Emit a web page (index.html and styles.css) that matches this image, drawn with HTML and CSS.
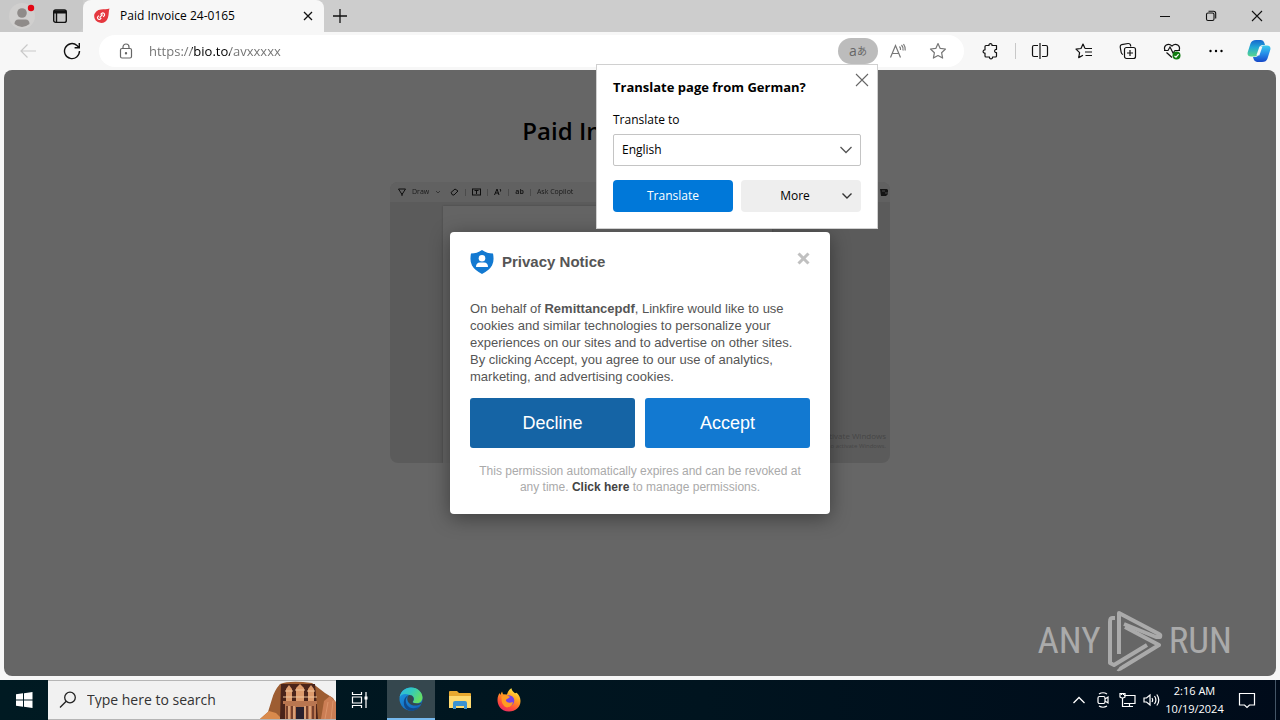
FILE: index.html
```html
<!DOCTYPE html>
<html lang="en">
<head>
<meta charset="utf-8">
<title>Paid Invoice 24-0165</title>
<link rel="stylesheet" href="styles.css">
</head>
<body>
<header class="tabbar">
  <div class="tabbar-left">
    <button class="plain profile" aria-label="Profile">
      <svg width="30" height="30" viewBox="0 0 30 30"><circle cx="15" cy="15" r="13" fill="#d0cfce"/><circle cx="15" cy="12" r="4.800" fill="#8f8b89"/><path d="M7.500 23q0-4.500 4-4.500h7q4 0 4 4.500-4 3-7.500 3t-7.500-3z" fill="#8f8b89"/><circle cx="24" cy="7" r="3.200" fill="#e30613"/></svg>
    </button>
    <button class="plain workspaces" aria-label="Tab actions">
      <svg width="16" height="16" viewBox="0 0 16 16" fill="none" stroke="#111" stroke-width="1.400"><rect x="1.700" y="2" width="12.600" height="12.400" rx="2"/><path d="M2 4h12" stroke-width="3"/><path d="M4.500 4v10"/></svg>
    </button>
  </div>
  <div class="tab">
    <svg width="17" height="16" viewBox="0 0 17 16"><path d="M8 1.500C11 1 14 1.500 16.500.5 15.500 3 16 6 15 9.500A7 6.700 0 1 1 8 1.500z" fill="#e5383f"/><path d="M6.600 9.700l3-3.200M7.600 6.500l1-1a1.700 1.700 0 0 1 2.500 2.400l-1 1M8.300 10l-1 1A1.700 1.700 0 0 1 4.900 8.600l1-1" stroke="#fff" stroke-width="1.100" fill="none"/></svg>
    <span class="tab-title">Paid Invoice 24-0165</span>
    <button class="plain tab-close" aria-label="Close tab"><svg width="10" height="10" viewBox="0 0 10 10" stroke="#111" stroke-width="1.300"><path d="M1 1l8 8M9 1l-8 8"/></svg></button>
  </div>
  <button class="plain newtab" aria-label="New tab"><svg width="14" height="14" viewBox="0 0 14 14" stroke="#111" stroke-width="1.300"><path d="M7 0v14M0 7h14"/></svg></button>
  <div class="window-controls">
    <button class="plain" aria-label="Minimize"><svg width="12" height="12" viewBox="0 0 12 12"><path d="M1 6.500h10" stroke="#111"/></svg></button>
    <button class="plain" aria-label="Restore"><svg width="12" height="12" viewBox="0 0 12 12" fill="none" stroke="#111" stroke-width="1.100"><rect x="1.500" y="3" width="7.500" height="7.500" rx="1.500"/><path d="M3.500 1.200h5q2.200 0 2.200 2.200v5"/></svg></button>
    <button class="plain" aria-label="Close"><svg width="12" height="12" viewBox="0 0 12 12" stroke="#111" stroke-width="1.100"><path d="M1 1l10 10M11 1L1 11"/></svg></button>
  </div>
</header>

<nav class="toolbar">
  <button class="plain tool" aria-label="Back"><svg width="18" height="16" viewBox="0 0 18 16" fill="none" stroke="#c9c9c9" stroke-width="1.200"><path d="M17 8H2M8.500 1.500L2 8l6.500 6.500"/></svg></button>
  <button class="plain tool" aria-label="Refresh"><svg width="18" height="18" viewBox="0 0 18 18" fill="none" stroke="#111" stroke-width="1.400"><path d="M16.500 9A7.500 7.500 0 1 1 14 3.500l2 2M16.300 1v4.700h-4.700"/></svg></button>
  <div class="address">
    <svg class="lock" width="14" height="16" viewBox="0 0 14 16" fill="none" stroke="#666" stroke-width="1.200"><rect x="1.500" y="5.500" width="11" height="9.500" rx="1.500"/><path d="M4 5.500V4a3 3 0 0 1 6 0v1.500"/><circle cx="7" cy="10.300" r=".6" fill="#666"/></svg>
    <input class="url" type="text" aria-label="Address" value="https://bio.to/avxxxxx">
    <div class="translate-anchor">
      <button class="plain translate-toggle" aria-label="Translate">a<span>あ</span></button>
      <section class="translate-popup" aria-label="Translate">
        <div class="translate-head">
          <h2>Translate page from German?</h2>
          <button class="plain popup-close" aria-label="Close translate"><svg width="14" height="14" viewBox="0 0 14 14" stroke="#666" stroke-width="1.100"><path d="M1 1l12 12M13 1L1 13"/></svg></button>
        </div>
        <label for="language">Translate to</label>
        <div class="select-wrap">
          <select id="language"><option>English</option></select>
          <svg width="12" height="8" viewBox="0 0 12 8" fill="none" stroke="#555" stroke-width="1.300"><path d="M.5 1L6 6.500 11.500 1"/></svg>
        </div>
        <div class="popup-actions">
          <button class="btn primary">Translate</button>
          <button class="btn more"><span>More</span><svg width="12" height="8" viewBox="0 0 12 8" fill="none" stroke="#333" stroke-width="1.400"><path d="M1.500 1.500L6 6l4.500-4.500"/></svg></button>
        </div>
      </section>
    </div>
    <button class="plain addr-btn" aria-label="Read aloud"><svg width="18" height="16" viewBox="0 0 18 16" fill="none" stroke="#777" stroke-width="1.200"><path d="M1.500 14.500L6.500 2.500l5 12M3.300 10.500h6.500M10.500 3.500q1.300 1.300 1 3.500M12.500 2q2.200 2.300 1.500 5.500M14.500 1q2.200 3 1.700 6.500"/></svg></button>
    <button class="plain addr-btn" aria-label="Favorite"><svg width="18" height="18" viewBox="0 0 18 18" fill="none" stroke="#777" stroke-width="1.200" stroke-linejoin="round"><path d="M9 1.500l2.200 4.900 5.300.6-3.900 3.700 1 5.400L9 13.500l-4.600 2.600 1-5.400L1.500 7l5.300-.6z"/></svg></button>
  </div>
  <button class="plain tool" aria-label="Extensions"><svg width="18" height="18" viewBox="0 0 18 18" fill="none" stroke="#111" stroke-width="1.200" stroke-linejoin="round"><path d="M4 3.500h3C6.500 1 10.500 1 10 3.500h4.500v4c-2.500-.5-2.500 3.500 0 3V14q0 1-1 1H10.500c.5 2.400-3.500 2.400-3 0H4q-1 0-1-1v-3C.500 11.500.500 7.500 3 8V4.500q0-1 1-1z"/></svg></button>
  <span class="divider"></span>
  <button class="plain tool" aria-label="Split screen"><svg width="18" height="18" viewBox="0 0 18 18" fill="none" stroke="#111" stroke-width="1.200"><path d="M7 3.500H3q-1.500 0-1.500 1.500v8q0 1.500 1.500 1.500h4M11 3.500h4q1.500 0 1.500 1.500v8q0 1.500-1.500 1.500h-4M9 1v16"/></svg></button>
  <button class="plain tool" aria-label="Favorites"><svg width="18" height="18" viewBox="0 0 18 18" fill="none" stroke="#111" stroke-width="1.200" stroke-linejoin="round"><path d="M10 6.500L8 2 6 6.500l-5 .6 3.600 3.500-.9 5L8 13.300M10 6.500h7M10 10h7M10.500 13.500H17"/></svg></button>
  <button class="plain tool" aria-label="Collections"><svg width="18" height="18" viewBox="0 0 18 18" fill="none" stroke="#111" stroke-width="1.200"><path d="M4 12.500Q2.500 12 2.200 10.500L1.200 5q-.2-2 1.500-2.300L9 1.500q2-.2 2.500 1.500l.2 1.500"/><rect x="5.500" y="5.500" width="11" height="11" rx="2"/><path d="M11 8v6M8 11h6"/></svg></button>
  <button class="plain tool" aria-label="Browser essentials"><svg width="18" height="18" viewBox="0 0 18 18" fill="none" stroke="#111" stroke-width="1.200"><path d="M2 8.200C0 4 5 .2 9 4c4-3.800 9 0 7 4.200M1 8.500h4l2-3.500 3 6 2-2.500h5M3.500 10.500L9 15.500"/><circle cx="13.500" cy="13.500" r="4" fill="#107c10" stroke="none"/><path d="M11.500 14l1.500 1.200 2.600-3" stroke="#fff"/></svg></button>
  <button class="plain tool" aria-label="Settings and more"><svg width="16" height="4" viewBox="0 0 16 4"><circle cx="2.500" cy="2" r="1.200"/><circle cx="8" cy="2" r="1.200"/><circle cx="13.500" cy="2" r="1.200"/></svg></button>
  <button class="plain tool copilot" aria-label="Copilot">
    <svg width="24" height="24" viewBox="0 0 24 24"><defs><linearGradient id="cpA" x1="0" y1="0" x2="0" y2="1"><stop offset="0" stop-color="#1667cf"/><stop offset=".45" stop-color="#22a7d5"/><stop offset="1" stop-color="#58d68c"/></linearGradient><linearGradient id="cpB" x1="0" y1="0" x2="0" y2="1"><stop offset="0" stop-color="#39cdee"/><stop offset=".5" stop-color="#268ce9"/><stop offset="1" stop-color="#1648c8"/></linearGradient></defs><path d="M9 1h5q2.500 0 3.300 2.700L18 6h-2.500q-2 0-2.700 2.300L11 15q-.7 2.500-3.400 2.500H4q-4.200 0-3.300-4.300L3.500 4.500Q4.700 1 9 1z" fill="url(#cpA)"/><path d="M15 23h-5q-2.500 0-3.300-2.700L6 18h2.500q2 0 2.700-2.300L13 9q.7-2.500 3.400-2.500H20q4.200 0 3.300 4.300l-2.800 8.700Q19.300 23 15 23z" fill="url(#cpB)"/><path d="M12.500 7.500h3l-3.200 9h-3z" fill="#f7f7f7"/></svg>
  </button>
</nav>

<main class="viewport">
  <div class="page">
    <h1>Paid Invoice 24-0165</h1>
    <div class="preview">
      <div class="preview-bar">
        <svg width="8" height="8" viewBox="0 0 8 8" fill="none" stroke="#222"><path d="M.5 1h7L4 6.500zM4 5v3"/></svg>
        <span>Draw</span>
        <svg width="6" height="4" viewBox="0 0 6 4" fill="none" stroke="#888"><path d="M1 1l2 2 2-2"/></svg>
        <svg class="eraser" width="9" height="8" viewBox="0 0 9 8" fill="none" stroke="#222"><path d="M1 4.500L5 1l3 2-4 4H2.500z"/></svg>
        <i></i>
        <svg width="9" height="8" viewBox="0 0 9 8" fill="none" stroke="#222"><rect x=".5" y="1" width="8" height="6"/><path d="M2.500 2.500h4M4.500 2.500V6"/></svg>
        <i></i>
        <svg width="8" height="8" viewBox="0 0 8 8" fill="none" stroke="#222"><path d="M.5 7L3 1l2 6M1.500 5h3M6 1q1 1 .5 2.500"/></svg>
        <i></i>
        <b>ab</b>
        <i></i>
        <span>Ask Copilot</span>
        <svg class="save" width="9" height="8" viewBox="0 0 9 8"><path d="M0 1h7l1 1v4L6 8H1z" fill="#333"/><path d="M2 3h3M5 5h3" stroke="#bbb"/></svg>
      </div>
      <div class="preview-body">
        <div class="paper"></div>
        <div class="activate"><span>Activate Windows</span><small>Go to Settings to activate Windows.</small></div>
      </div>
    </div>
  </div>
  <div class="overlay">
    <section class="notice" role="dialog" aria-labelledby="notice-title">
      <div class="notice-head">
        <svg width="24" height="24" viewBox="0 0 24 24"><path d="M12 0Q17 3.500 23 3.500q1.500 7.500-1 12T12 24Q4.500 20 2 15.500T1 3.500Q7 3.500 12 0z" fill="#1279d1"/><circle cx="12" cy="8.300" r="3.300" fill="#fff"/><path d="M6 17q0-4.500 4-4.500h4q4 0 4 4.500z" fill="#fff"/></svg>
        <h2 id="notice-title">Privacy Notice</h2>
        <button class="plain notice-close" aria-label="Close notice"><svg width="13" height="13" viewBox="0 0 13 13" stroke="#c0c0c0" stroke-width="3"><path d="M1.500 1.500l10 10M11.500 1.500l-10 10"/></svg></button>
      </div>
      <p class="notice-text">On behalf of <strong>Remittancepdf</strong>, Linkfire would like to use<br>cookies and similar technologies to personalize your<br>experiences on our sites and to advertise on other sites.<br>By clicking Accept, you agree to our use of analytics,<br>marketing, and advertising cookies.</p>
      <div class="notice-actions">
        <button class="choice decline">Decline</button>
        <button class="choice">Accept</button>
      </div>
      <p class="notice-foot">This permission automatically expires and can be revoked at<br>any time. <a href="#">Click here</a> to manage permissions.</p>
    </section>
  </div>
  <div class="watermark">
    <span>ANY</span>
    <svg width="56" height="62" viewBox="0 0 56 62" fill="none" stroke="#aaa" stroke-width="4" stroke-linejoin="round"><path d="M8 8H5Q3 8 3 12V53l4 2L40 35"/><path d="M12 44V3L52 24q2 1 1 3L49 27 17 14"/><path d="M18 17l34 18L16 57q-4 3-5 2"/></svg>
    <span>RUN</span>
  </div>
</main>

<footer class="taskbar">
  <button class="plain task" aria-label="Start"><svg width="17" height="16" viewBox="0 0 17 16" fill="#fff"><path d="M0 2.300l7-1v6.200H0zM8 1.200L16.500 0v7.500H8zM0 8.500h7v6.200l-7-1zM8 8.500h8.500V16L8 14.800z"/></svg></button>
  <label class="search">
    <svg width="18" height="18" viewBox="0 0 18 18" fill="none" stroke="#222" stroke-width="1.300"><circle cx="11" cy="6.500" r="5.300"/><path d="M7.200 10.300L1 16.500"/></svg>
    <input type="search" placeholder="Type here to search" aria-label="Search">
    <svg class="petra" width="76" height="38" viewBox="0 0 76 38"><path d="M0 38L8 31l4-13q2-8 8-15 10-4 32-1l13 10 8 5 3 5v16z" fill="#9d5d32"/><path d="M0 38l9-8 7 2 6 6z" fill="#d98a4c"/><path d="M21 3h34l3 35H20z" fill="#4a241a"/><path d="M25 38V23h31v15zM23 20h34v3H23z" fill="#b97650"/><path d="M26 8l3-4 3 4v12h-6zM48 8l3-4 3 4v12h-6zM36 7l4-4 4 4v13h-8z" fill="#dd9b6c"/><path d="M25 10h8M47 10h8M35 9h10M23 16h34" stroke="#f0c49a" stroke-width="1.200"/><path d="M27 25v13M32 25v13M47 25v13M53 25v13" stroke="#76402c" stroke-width="2"/><path d="M36 26h8v12h-8z" fill="#29212e"/><path d="M34 25v13M45 25v13M29 25v13M50 25v13" stroke="#efbb91" stroke-width="1.200"/><path d="M61 38l3-18 6-5 6 6v17z" fill="#cb7e54"/><path d="M65 38l3-17M71 38l2-18" stroke="#dc946a"/></svg>
  </label>
  <button class="plain task" aria-label="Task view"><svg width="18" height="18" viewBox="0 0 18 18" fill="none" stroke="#fff" stroke-width="1.200"><path d="M1.500 1v2.500h9V1M1.500 17v-2.500h9V17M1.500 6h9v6h-9zM15 1v16"/><rect x="13.500" y="5.500" width="3" height="3" fill="#fff" stroke="none"/></svg></button>
  <button class="plain task active" aria-label="Microsoft Edge">
    <svg width="24" height="24" viewBox="0 0 24 24"><defs><linearGradient id="egA" x1="0" y1="0" x2="1" y2=".5"><stop offset="0" stop-color="#30b8e8"/><stop offset=".5" stop-color="#32c9bd"/><stop offset="1" stop-color="#65de64"/></linearGradient><linearGradient id="egB" x1="0" y1="0" x2=".6" y2="1"><stop offset="0" stop-color="#1c9ce5"/><stop offset="1" stop-color="#1467bd"/></linearGradient></defs><circle cx="12" cy="12" r="11.500" fill="url(#egB)"/><path d="M.7 10C2 4 6.500.5 12 .5c7 0 11.500 5 11.500 10 0 4-3 5.800-6 5.800-2.500 0-4-.8-3.500-1.800 2.500-3 0-6.700-4-6.700C6 6 2.500 7 .7 10z" fill="url(#egA)"/><path d="M10 8c-3 2-4 5.500-2.500 9 2 4.500 8 5.500 13.500 2.500-3 4-8 5-12 3.500C3 20 3.500 10 10 8z" fill="#114a8b"/><path d="M13.800 14.500c2.500-3 0-6.700-3.800-6.500-2 2-2.500 5 0 8 3 3.300 8 3 11.500 1.200l1.800-2c-2 1.300-6 1.700-8.500.8-.8-.3-1.500-.8-1-1.500z" fill="#35474e"/></svg>
  </button>
  <button class="plain task" aria-label="File Explorer"><svg width="22" height="20" viewBox="0 0 22 20"><path d="M0 2q0-1 1-1h7l2 2h11q1 0 1 1v14H0z" fill="#e8a92f"/><path d="M0 6h22v12H0z" fill="#ffda70"/><path d="M4 19v-6q0-2 2-2h10q2 0 2 2v6h-3v-3H7v3z" fill="#3b92d2"/></svg></button>
  <button class="plain task" aria-label="Firefox">
    <svg width="24" height="24" viewBox="0 0 24 24"><defs><linearGradient id="ffA" x1=".8" y1="0" x2=".3" y2="1"><stop offset="0" stop-color="#fff04c"/><stop offset=".4" stop-color="#ffa020"/><stop offset=".75" stop-color="#ff4c3b"/><stop offset="1" stop-color="#e92b62"/></linearGradient></defs><path d="M12 23.500C4 23.500.5 17.500.5 12c0-3 1-5.500 2.200-7l.5 2L5 3.500l1 2.700 4 .2C11 3 13 1 14.500.3c.3 2.700 2 3.500 3.500 5l1.500-.5c2.300 1.600 4 4.700 4 8.200 0 6-5 10.500-11.500 10.500z" fill="url(#ffA)"/><circle cx="12" cy="12.500" r="5.300" fill="#7542e5"/><path d="M4.500 8.500q5-2.500 8.500.5l-2 1.500q-2.500.5-2 2.500 2 3 7 1-1 5-6 5.500Q4 18 4.500 8.500z" fill="#ff9c22"/></svg>
  </button>
  <div class="tray">
    <button class="plain" aria-label="Show hidden icons"><svg width="12" height="8" viewBox="0 0 12 8" fill="none" stroke="#fff" stroke-width="1.300"><path d="M.5 7L6 1.500 11.500 7"/></svg></button>
    <button class="plain" aria-label="Meet now"><svg width="14" height="18" viewBox="0 0 14 18" fill="none" stroke="#fff" stroke-width="1.200"><rect x="2" y="5.500" width="7" height="7" rx="1.500"/><path d="M9 8l3-2v6l-3-2M3 3q4-2.500 8 0M3 15q4 2.500 8 0"/></svg></button>
    <button class="plain" aria-label="Network"><svg width="17" height="16" viewBox="0 0 17 16" fill="none" stroke="#fff" stroke-width="1.200"><path d="M5 3.500h11v8H5M10.500 11.500V14M7 14.500h7M3.500 6v8.500H7"/><path d="M1 1.500h5V5q-2.500 2-5 0zM2.500 1v2M4.500 1v2"/></svg></button>
    <button class="plain" aria-label="Volume"><svg width="17" height="14" viewBox="0 0 17 14" fill="none" stroke="#fff" stroke-width="1.200"><path d="M1 5h2.500L7 2v10L3.500 9H1zM9 5q1.300 2 0 4M11.500 3q2.800 4 0 8M13.800 1.500q4 5.500 0 11"/></svg></button>
    <div class="clock"><time>2:16 AM</time><time>10/19/2024</time></div>
    <button class="plain notifications" aria-label="Notifications"><svg width="20" height="17" viewBox="0 0 20 17" fill="none" stroke="#fff" stroke-width="1.200"><path d="M2.500 1.500h15v11.500h-5L10 15.500 7.500 13h-5z"/></svg></button>
  </div>
</footer>
</body>
</html>
```
FILE: styles.css
```css
* { box-sizing: border-box; }
body {
  margin: 0;
  min-height: 100vh;
  display: flex;
  flex-direction: column;
  background: #f7f7f7;
  color: #000;
  font: 12px/16px "Open Sans", "Noto Sans", sans-serif;
}
h1, h2, p { margin: 0; }
button, input, select { font: inherit; color: inherit; }
svg { display: block; flex: none; }
.plain {
  display: flex;
  align-items: center;
  justify-content: center;
  padding: 0;
  border: 0;
  background: none;
}

/* Tab strip */
.tabbar { display: flex; height: 32px; background: #cdcdcd; }
.tabbar-left {
  display: flex;
  align-items: center;
  gap: 15px;
  width: 83px;
  padding-left: 7px;
  border-bottom-right-radius: 6px;
  background: #c8c8c8;
}
.tab {
  display: flex;
  align-items: center;
  gap: 10px;
  width: 241px;
  padding: 0 11px 0 10px;
  border-radius: 8px 8px 0 0;
  background: #f7f7f7;
}
.tab-title { flex: 1; font-size: 12px; }
.newtab { width: 32px; }
.window-controls { display: flex; margin-left: auto; }
.window-controls button { width: 46px; }

/* Toolbar */
.toolbar { display: flex; align-items: center; height: 38px; padding-left: 6px; }
.tool { width: 44px; height: 32px; }
.copilot { width: 42px; }
.divider { width: 1px; height: 16px; margin: 0 2px; background: #c8c8c8; }
.address {
  flex: 1;
  display: flex;
  align-items: center;
  height: 32px;
  margin: 0 5px;
  padding: 0 6px 0 20px;
  border-radius: 16px;
  background: #fff;
}
.url {
  flex: 1;
  min-width: 0;
  margin-left: 16px;
  padding: 0;
  border: 0;
  outline: 0;
  font-size: 13px;
  line-height: 20px;
  color: transparent;
  background: linear-gradient(90deg, #707070 43px, #000 43px, #000 81px, #707070 81px);
  background-clip: text;
}
.translate-anchor { position: relative; }
.translate-toggle {
  width: 40px;
  height: 26px;
  border-radius: 13px;
  background: #bcbcbc;
  color: #666;
  font: 14px/16px "Open Sans", "Noto Sans CJK JP", sans-serif;
}
.translate-toggle span { font-size: 10px; }
.addr-btn { width: 40px; height: 28px; }

/* Translate popup */
.translate-popup {
  position: absolute;
  z-index: 10;
  top: 26px;
  right: 0;
  width: 282px;
  padding: 8px 16px 16px;
  border: 1px solid #d0d0d0;
  background: #fff;
}
.translate-head { display: flex; justify-content: space-between; }
.translate-head h2 { padding-top: 4px; font-size: 13px; line-height: 20px; font-weight: 700; }
.popup-close { width: 14px; height: 14px; margin-right: -8px; }
.translate-popup label { display: block; margin: 15px 0 6px; line-height: 16px; }
.select-wrap { display: grid; align-items: center; }
.select-wrap > * { grid-area: 1 / 1; }
.select-wrap select {
  appearance: none;
  height: 32px;
  padding: 0 8px;
  border: 1px solid #c4c4c4;
  border-radius: 2px;
  background: #fff;
}
.select-wrap svg { justify-self: end; margin-right: 9px; pointer-events: none; }
.popup-actions { display: grid; grid-template-columns: 1fr 1fr; gap: 8px; margin-top: 14px; }
.btn { height: 32px; border: 0; border-radius: 4px; padding: 0 8px; }
.primary { background: #0078d9; color: #fff; }
.more { display: flex; align-items: center; background: #eee; }
.more span { flex: 1; }

/* Page viewport */
.viewport {
  position: relative;
  flex: 1;
  margin: 0 4px 4px;
  border-radius: 8px;
  overflow: hidden;
  background: #fff;
}
.page { display: flex; flex-direction: column; align-items: center; padding-top: 45px; }
.page h1 { font-size: 24px; line-height: 32px; font-weight: 600; }
.preview { width: 500px; margin-top: 35px; border-radius: 8px; overflow: hidden; background: #e4e4e4; }
.preview-bar {
  display: flex;
  align-items: center;
  gap: 6px;
  height: 20px;
  padding: 0 1px 0 8px;
  background: #f3f3f3;
  color: #444;
  font-size: 7px;
  filter: blur(0.6px);
}
.preview-bar i { width: 1px; height: 7px; background: #bbb; }
.eraser { margin-left: 3px; }
.save { margin-left: auto; }
.preview-body {
  display: flex;
  align-items: flex-end;
  gap: 4px;
  height: 261px;
  padding: 4px 4px 0 53px;
}
.paper { flex: 1; align-self: stretch; background: #fafafa; box-shadow: 0 0 2px #aaa; }
.activate { width: 110px; padding-bottom: 12px; text-align: right; color: #b0b0b0; font-size: 8px; line-height: 10px; }
.activate span, .activate small { display: block; white-space: nowrap; }
.activate small { font-size: 6px; }

/* Privacy notice */
.overlay {
  position: absolute;
  inset: 0;
  display: grid;
  place-items: center;
  background: rgba(0, 0, 0, 0.6);
}
.notice {
  width: 380px;
  padding: 18px 20px 19px;
  border-radius: 4px;
  background: #fff;
  color: #555;
  box-shadow: 0 4px 20px rgba(0, 0, 0, 0.4);
  font-family: "Liberation Sans", Arial, sans-serif;
}
.notice-head { display: flex; align-items: center; gap: 8px; height: 24px; }
.notice-head h2 { flex: 1; font-size: 15px; line-height: 20px; }
.notice-close { width: 13px; height: 13px; margin-bottom: 8px; }
.notice-text { margin-top: 26px; font-size: 13px; line-height: 17px; white-space: nowrap; }
.notice-actions { display: grid; grid-template-columns: 1fr 1fr; gap: 10px; margin-top: 13px; }
.choice { height: 50px; border: 0; border-radius: 3px; background: #1279d1; color: #fff; font-size: 18px; }
.decline { background: #1564a5; }
.notice-foot { margin-top: 15px; color: #aaa; font-size: 12px; line-height: 16px; text-align: center; white-space: nowrap; }
.notice-foot a { color: #444; font-weight: 700; text-decoration: none; }

/* Watermark */
.watermark {
  position: absolute;
  right: 44px;
  bottom: 4px;
  display: flex;
  align-items: center;
  gap: 6px;
  color: #aaa;
  font: 37px/44px "Roboto Condensed", "Liberation Sans Narrow", sans-serif;
}

/* Taskbar */
.taskbar { display: flex; height: 40px; background: linear-gradient(90deg, #001a22, #00141f 55%, #000b1a); }
.task { width: 48px; margin-right: 1px; }
.task:first-child { margin-right: 0; }
.active { margin-left: 2px; background: #35474e; border-bottom: 2px solid #76b9ed; }
.search {
  display: flex;
  align-items: center;
  width: 288px;
  padding-left: 11px;
  border: 1px solid #b5b5b5;
  border-width: 1px 0;
  background: #f1f1f1;
}
.search input {
  flex: 1;
  min-width: 0;
  margin-left: 10px;
  padding: 0;
  border: 0;
  outline: 0;
  background: none;
  font-size: 14px;
}
.search input::placeholder { color: #333; opacity: 1; }
.tray {
  display: flex;
  margin-left: auto;
  margin-right: 4px;
  padding-right: 7px;
  border-right: 1px solid #456;
  color: #fff;
}
.tray button { width: 24px; }
.clock {
  display: flex;
  flex-direction: column;
  justify-content: center;
  width: 63px;
  text-align: center;
  font-size: 11px;
  line-height: 18px;
}
.tray .notifications { width: 42px; }
```
